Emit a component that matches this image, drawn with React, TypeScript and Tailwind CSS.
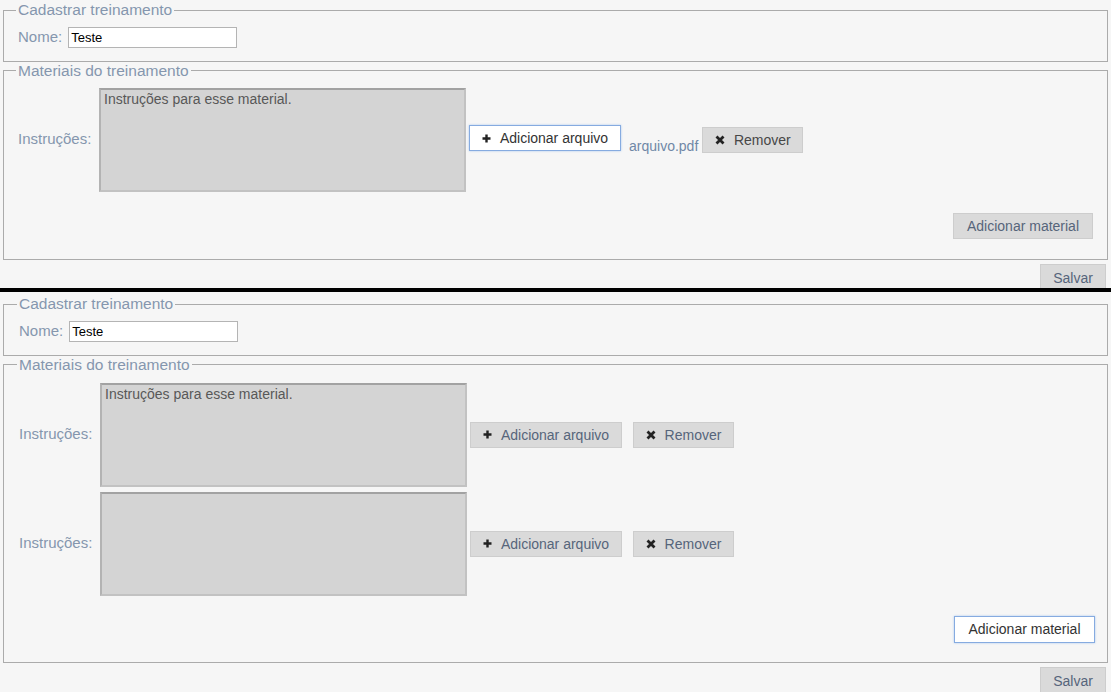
import React from "react";

const FONT = "[font-family:'Liberation_Sans',Arial,sans-serif]";

function PlusIcon() {
  return (
    <svg width="9" height="9" viewBox="0 0 9 9" className="shrink-0">
      <path d="M4.5 0.5v8M0.5 4.5h8" stroke="#222" strokeWidth="2.4" />
    </svg>
  );
}

function TimesIcon() {
  return (
    <svg width="10" height="10" viewBox="0 0 10 10" className="shrink-0">
      <path d="M1.5 1.5l7 7M8.5 1.5l-7 7" stroke="#222" strokeWidth="2.8" />
    </svg>
  );
}

interface BtnProps {
  children: React.ReactNode;
  focused?: boolean;
  icon?: "plus" | "times";
  className?: string;
}

function Btn({ children, focused, icon, className = "" }: BtnProps) {
  const look = focused
    ? "bg-white border-[#86abe0] text-[#333] shadow-[0_0_2px_#a9c6ee]"
    : "bg-[#dadada] border-[#cdcdcd] text-[#56657b]";
  return (
    <button
      className={`h-[26px] flex items-center justify-center gap-[9px] border text-[14px] leading-none ${look} ${className}`}
    >
      {icon === "plus" && <PlusIcon />}
      {icon === "times" && <TimesIcon />}
      <span>{children}</span>
    </button>
  );
}

function Legend({ children }: { children: React.ReactNode }) {
  return (
    <legend className="px-[2px] -ml-[2px] text-[15.5px] leading-[18px] text-[#8596ae]">
      {children}
    </legend>
  );
}

function Instrucoes({ text }: { text?: string }) {
  return (
    <>
      <span className="w-[75px] text-[15px] text-[#8596ae]">Instruções:</span>
      <textarea
        readOnly
        defaultValue={text}
        className="ml-[6px] w-[367px] h-[104px] resize-none bg-[#d4d4d4] border-2 border-[#c2c2c2] border-t-[#a2a2a2] border-l-[#b3b3b3] px-[3px] pt-[1px] text-[14px] leading-[17px] text-[#585858] outline-none"
      />
    </>
  );
}

function NomeFieldset({ shift = false }: { shift?: boolean }) {
  return (
    <fieldset
      className={`mx-[3px] border border-[#ababab] ${shift ? "pl-[15px]" : "pl-[14px]"} pr-[12px] pt-[7px] pb-[12px]`}
    >
      <Legend>Cadastrar treinamento</Legend>
      <div className="flex items-center">
        <span className="text-[15px] text-[#8596ae]">Nome:</span>
        <input
          readOnly
          defaultValue="Teste"
          className="ml-[6px] w-[169px] h-[21px] bg-white border border-[#b4b4b4] px-[2px] text-[13px] text-black outline-none"
        />
      </div>
    </fieldset>
  );
}

function TopShot() {
  return (
    <div className="h-[288px] overflow-hidden pt-[1px]">
      <NomeFieldset />
      <fieldset className="mx-[3px] border border-[#ababab] pl-[14px] pr-[14px] pt-[8px] pb-[20px]">
        <Legend>Materiais do treinamento</Legend>
        <div className="flex items-center">
          <Instrucoes text="Instruções para esse material." />
          <Btn focused icon="plus" className="ml-[3px] w-[152px] -mt-[3px]">
            Adicionar arquivo
          </Btn>
          <span className="ml-[8px] mt-[14px] text-[14px] text-[#7088a6]">arquivo.pdf</span>
          <Btn icon="times" className="ml-[4px] w-[101px] border-[#c4c4c4] text-[#474747]">
            Remover
          </Btn>
        </div>
        <div className="flex justify-end mt-[21px]">
          <Btn className="w-[140px]">Adicionar material</Btn>
        </div>
      </fieldset>
      <div className="flex justify-end mt-[4px] mr-[5px]">
        <Btn className="w-[66px] h-[28px]">Salvar</Btn>
      </div>
    </div>
  );
}

function BottomShot() {
  return (
    <div className="h-[400px] overflow-hidden pt-[3px]">
      <NomeFieldset shift />
      <fieldset className="mx-[3px] border border-[#ababab] pl-[15px] pr-[12px] pt-[9px] pb-[19px]">
        <Legend>Materiais do treinamento</Legend>
        <div className="flex flex-col gap-[5px]">
          {["Instruções para esse material.", ""].map((t, i) => (
            <div key={i} className="flex items-center">
              <Instrucoes text={t} />
              <Btn icon="plus" className="ml-[3px] w-[152px]">
                Adicionar arquivo
              </Btn>
              <Btn icon="times" className="ml-[11px] w-[101px]">
                Remover
              </Btn>
            </div>
          ))}
        </div>
        <div className="flex justify-end mt-[20px]">
          <Btn focused className="w-[141px] h-[27px]">
            Adicionar material
          </Btn>
        </div>
      </fieldset>
      <div className="flex justify-end mt-[4px] mr-[5px]">
        <Btn className="w-[66px] h-[28px]">Salvar</Btn>
      </div>
    </div>
  );
}

export default function App() {
  return (
    <div className={`w-[1111px] h-[692px] overflow-hidden bg-[#f6f6f6] ${FONT}`}>
      <TopShot />
      <div className="h-[4px] bg-black" />
      <BottomShot />
    </div>
  );
}
